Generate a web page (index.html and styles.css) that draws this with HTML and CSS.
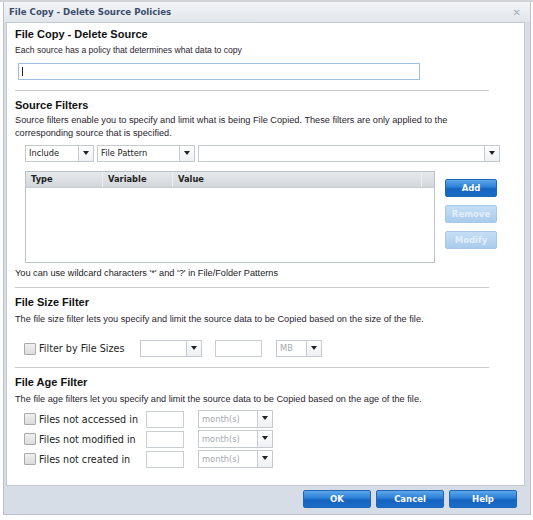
FILE: index.html
```html
<!DOCTYPE html>
<html>
<head>
<meta charset="utf-8">
<link rel="stylesheet" href="styles.css">
</head>
<body>
<div class="topstrip"></div>
<div class="dialog">
  <div class="titlebar">
    <span class="title">File Copy - Delete Source Policies</span>
    <span class="close">&#x2715;</span>
  </div>
  <div class="panel">
    <h1 class="h-main">File Copy - Delete Source</h1>
    <p class="desc small">Each source has a policy that determines what data to copy</p>
    <div class="name-input"><span class="caret"></span></div>
    <hr class="divider">

    <h2 class="h-sec">Source Filters</h2>
    <p class="desc two">Source filters enable you to specify and limit what is being File Copied. These filters are only applied to the corresponding source that is specified.</p>
    <div class="filter-row">
      <div class="combo w-include"><span class="val">Include</span><span class="arrow"></span></div>
      <div class="combo w-pattern"><span class="val">File Pattern</span><span class="arrow"></span></div>
      <div class="combo w-value"><span class="val"></span><span class="arrow"></span></div>
    </div>
    <div class="table-row">
      <div class="grid">
        <div class="grid-head">
          <div class="col c-type">Type</div>
          <div class="col c-var">Variable</div>
          <div class="col c-val">Value</div>
          <div class="col c-end"></div>
        </div>
      </div>
      <div class="side-btns">
        <button class="btn small">Add</button>
        <button class="btn small disabled">Remove</button>
        <button class="btn small disabled">Modify</button>
      </div>
    </div>
    <p class="note">You can use wildcard characters '*' and '?' in File/Folder Patterns</p>
    <hr class="divider d2">

    <h2 class="h-sec">File Size Filter</h2>
    <p class="desc loose">The file size filter lets you specify and limit the source data to be Copied based on the size of the file.</p>
    <div class="size-row">
      <label class="check"><span class="box"></span><span class="lbl">Filter by File Sizes</span></label>
      <div class="combo w-op"><span class="val"></span><span class="arrow"></span></div>
      <div class="field w-size"></div>
      <div class="combo w-unit"><span class="val dim">MB</span><span class="arrow"></span></div>
    </div>
    <hr class="divider d3">

    <h2 class="h-sec">File Age Filter</h2>
    <p class="desc loose">The file age filters let you specify and limit the source data to be Copied based on the age of the file.</p>
    <div class="age-rows">
      <div class="age-row">
        <label class="check"><span class="box"></span><span class="lbl">Files not accessed in</span></label>
        <div class="field w-age"></div>
        <div class="combo w-month"><span class="val dim">month(s)</span><span class="arrow"></span></div>
      </div>
      <div class="age-row">
        <label class="check"><span class="box"></span><span class="lbl">Files not modified in</span></label>
        <div class="field w-age"></div>
        <div class="combo w-month"><span class="val dim">month(s)</span><span class="arrow"></span></div>
      </div>
      <div class="age-row">
        <label class="check"><span class="box"></span><span class="lbl">Files not created in</span></label>
        <div class="field w-age"></div>
        <div class="combo w-month"><span class="val dim">month(s)</span><span class="arrow"></span></div>
      </div>
    </div>
  </div>
  <div class="footer">
    <button class="btn big">OK</button>
    <button class="btn big">Cancel</button>
    <button class="btn big">Help</button>
  </div>
</div>
</body>
</html>
```

FILE: styles.css
```css
* { box-sizing: border-box; }
html, body { margin: 0; padding: 0; background: #ffffff; }
body { width: 533px; height: 520px; overflow: hidden; font-family: "Liberation Sans", Arial, sans-serif; color: #222; }

.topstrip { height: 2px; background: #cfd3d8; }

.dialog {
  margin: 0 2px 0 3px;
  background: #d6dde6;
  border: 1px solid #b9c1cc;
  border-top: none;
  padding-bottom: 6px;
}

.titlebar {
  height: 20px;
  display: flex;
  align-items: center;
  justify-content: space-between;
  padding: 0 9px 0 5px;
  background: linear-gradient(#f3f5f8, #e1e6ec);
}
.title {
  font-family: "DejaVu Sans", Verdana, sans-serif;
  font-weight: bold;
  font-size: 8.6px;
  color: #3a4c6c;
}
.close {
  font-family: "DejaVu Sans", sans-serif;
  font-size: 10px;
  font-weight: bold;
  color: #a9adb3;
}

.panel {
  margin: 0 5px 0 2px;
  height: 464px;
  background: #ffffff;
  border: 1px solid #c3c9d1;
  padding: 3px 0 0 8px;
}

.h-main {
  margin: 0;
  font-size: 11px;
  line-height: 16px;
  font-weight: bold;
  color: #111;
}
.h-sec {
  margin: 0;
  font-size: 11px;
  line-height: 14px;
  font-weight: bold;
  color: #111;
}
.desc {
  margin: 2px 0 0 0;
  font-size: 9.2px;
  line-height: 13px;
  color: #2b2430;
}
.desc.small { font-size: 8.6px; }
.desc.two { width: 480px; }
.desc.loose { margin-top: 4px; }

.name-input {
  margin: 6px 0 0 3px;
  width: 402px;
  height: 17px;
  border: 1px solid #9fc0e4;
  background: #fff;
  padding: 3px 0 0 3px;
}
.caret { display: block; width: 1px; height: 9px; background: #222; }

.divider {
  margin: 10px 0 0 0;
  width: 474px;
  border: none;
  border-top: 1px solid #c9cdd2;
  height: 0;
}
.divider + .h-sec { margin-top: 7px; }
.d2 { margin-top: 7px; }
.d3 { margin-top: 10px; }

.filter-row {
  display: flex;
  gap: 3px;
  margin: 5px 0 0 10px;
}
.combo {
  height: 17px;
  display: flex;
  border: 1px solid #c5cad1;
  background: #fff;
}
.combo .val {
  flex: 1;
  font-family: "DejaVu Sans", Verdana, sans-serif;
  font-size: 8.3px;
  line-height: 15px;
  padding-left: 3px;
  color: #222;
  white-space: nowrap;
  overflow: hidden;
}
.combo .val.dim { color: #a4a8ad; }
.combo .arrow {
  width: 15px;
  border-left: 1px solid #c5cad1;
  background: linear-gradient(#ffffff, #eef0f3);
  position: relative;
}
.combo .arrow::after {
  content: "";
  position: absolute;
  left: 4px;
  top: 5px;
  border-left: 3px solid transparent;
  border-right: 3px solid transparent;
  border-top: 4px solid #222;
}
.w-include { width: 69px; }
.w-pattern { width: 98px; }
.w-value { width: 302px; }

.table-row {
  display: flex;
  margin: 9px 0 0 10px;
}
.grid {
  width: 410px;
  height: 92px;
  border: 1px solid #bcc2ca;
  background: #fff;
}
.grid-head {
  display: flex;
  height: 16px;
  background: linear-gradient(#e6e9ec, #d3d7dc);
  border-bottom: 1px solid #c7ccd2;
}
.col {
  font-family: "DejaVu Sans", Verdana, sans-serif;
  font-weight: bold;
  font-size: 8.3px;
  line-height: 15px;
  color: #222;
  padding-left: 5px;
  border-right: 1px solid #eef0f2;
}
.c-type { width: 77px; }
.c-var { width: 70px; }
.c-val { width: 249px; }
.c-end { flex: 1; border-right: none; }

.side-btns {
  display: flex;
  flex-direction: column;
  gap: 8px;
  margin: 8px 0 0 10px;
}
.btn {
  font-family: "DejaVu Sans", Verdana, sans-serif;
  font-weight: bold;
  font-size: 8.5px;
  color: #fff;
  border: 1px solid #1f67b4;
  border-radius: 2px;
  background: linear-gradient(#5ea7ea 0%, #2a7fd6 45%, #1563c0 55%, #1a6cc8 100%);
  padding: 0;
  cursor: default;
}
.btn.small { width: 52px; height: 18px; }
.btn.disabled {
  background: linear-gradient(#c5def5, #a9cbec);
  border-color: #a8c8e8;
  color: #e3eef9;
}

.note {
  margin: 4px 0 0 0;
  font-size: 9.2px;
  line-height: 13px;
  color: #222;
}

.size-row {
  display: flex;
  align-items: center;
  margin: 14px 0 0 9px;
}
.check {
  display: flex;
  align-items: center;
}
.box {
  width: 12px;
  height: 12px;
  border: 1px solid #a6a9ad;
  background: linear-gradient(#f0f0f0, #dcdcdc);
  border-radius: 1px;
}
.lbl {
  font-family: "DejaVu Sans", Verdana, sans-serif;
  font-size: 9.6px;
  color: #222;
  margin-left: 3px;
  white-space: nowrap;
}
.size-row .check { width: 116px; }
.field {
  height: 17px;
  border: 1px solid #c9ced4;
  background: #fff;
}
.w-op { width: 62px; }
.w-size { width: 47px; margin-left: 13px; }
.w-unit { width: 46px; margin-left: 14px; }

.age-rows {
  display: flex;
  flex-direction: column;
  gap: 2px;
  margin: 4px 0 0 9px;
}
.age-row { display: flex; align-items: center; }
.age-row .check { width: 122px; }
.w-age { width: 38px; height: 17px; }
.w-month { width: 75px; margin-left: 14px; height: 18px; }
.w-month .val { line-height: 16px; }

.footer {
  display: flex;
  justify-content: flex-end;
  gap: 5px;
  padding: 4px 13px 0 0;
}
.btn.big { width: 68px; height: 18px; }
```
